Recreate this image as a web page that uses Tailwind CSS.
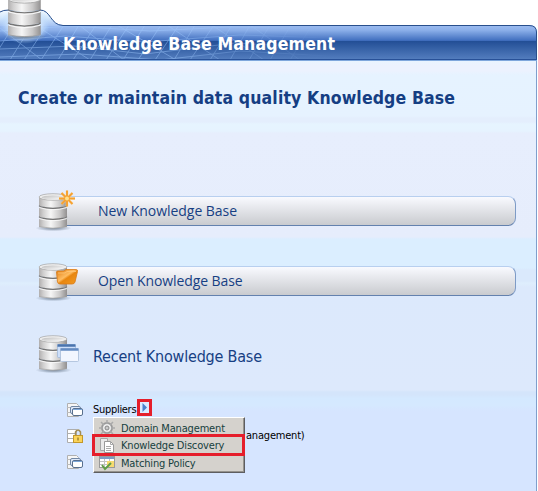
<!DOCTYPE html>
<html lang="en">
<head>
<meta charset="utf-8">
<title>Knowledge Base Management</title>
<script src="https://cdn.jsdelivr.net/npm/@tailwindcss/browser@4"></script>
</head>
<body class="w-[538px] h-[491px] overflow-hidden bg-white font-['DejaVu_Sans_Condensed','DejaVu_Sans',sans-serif]">
<svg width="0" height="0" class="absolute">
  <defs>
    <linearGradient id="metal"><stop offset="0" stop-color="#b0aeae"/><stop offset=".15" stop-color="#cfcece"/><stop offset=".42" stop-color="#f6f6f6"/><stop offset=".75" stop-color="#c9c8c8"/><stop offset="1" stop-color="#929090"/></linearGradient>
    <linearGradient id="top" x1="0" y1="0" x2="1" y2="1"><stop offset="0" stop-color="#bbb"/><stop offset="1" stop-color="#fff"/></linearGradient>
    <linearGradient id="gold" x1="0" y1="0" x2="1" y2="1"><stop offset="0" stop-color="#df790b"/><stop offset=".45" stop-color="#ffbd62"/><stop offset=".55" stop-color="#e8860f"/><stop offset="1" stop-color="#f29a22"/></linearGradient>
    <linearGradient id="bar" gradientUnits="userSpaceOnUse" x1="0" y1="25" x2="0" y2="60"><stop offset="0" stop-color="#9ebdf1"/><stop offset=".15" stop-color="#8bafe9"/><stop offset=".44" stop-color="#416fbf"/><stop offset=".47" stop-color="#234f96"/><stop offset="1" stop-color="#557fc0"/></linearGradient>
    <linearGradient id="tab" gradientUnits="userSpaceOnUse" x1="0" y1="10" x2="0" y2="27"><stop offset="0" stop-color="#f5fbff"/><stop offset=".45" stop-color="#d3e8fc"/><stop offset="1" stop-color="#9ebdf1"/></linearGradient>
    <linearGradient id="meshfade" gradientUnits="userSpaceOnUse" x1="0" y1="0" x2="330" y2="0"><stop offset="0" stop-color="#fff"/><stop offset=".5" stop-color="#fff"/><stop offset="1" stop-color="#000"/></linearGradient>
    <radialGradient id="shadow"><stop offset="0" stop-color="#536477" stop-opacity=".8"/><stop offset="1" stop-color="#536477" stop-opacity="0"/></radialGradient>
    <radialGradient id="glow"><stop offset="0" stop-color="#fff"/><stop offset=".6" stop-color="#dceeff" stop-opacity=".85"/><stop offset="1" stop-color="#b8daff" stop-opacity="0"/></radialGradient>
    <mask id="meshmask" maskUnits="userSpaceOnUse" x="0" y="25" width="330" height="36"><rect y="25" width="330" height="36" fill="url(#meshfade)"/></mask>
    <symbol id="db" viewBox="0 0 36 40">
      <ellipse cx="18" cy="35.500" rx="18" ry="3" fill="url(#shadow)"/>
      <path d="M3.500 4v9q14 4 28 0V4zM3.500 15v9q14 4 28 0v-9zM3.500 26v8q14 3 28 0v-8z" fill="url(#metal)"/>
      <path d="M3.500 13q1 1 2 1.200 12 3 24 0 1-.2 2-1.200M3.500 24q1 1 2 1.200 12 3 24 0 1-.2 2-1.200" fill="none" stroke="#757575" stroke-width="1.100"/>
      <path d="M3.500 34q14 3 28 0" fill="none" stroke="#a0a0a0" stroke-width=".7"/>
      <path d="M4 15q13.500 4 27 0M4 26q13.500 4 27 0" fill="none" stroke="#f8f8f8" stroke-width=".9"/>
      <ellipse cx="17.500" cy="4.300" rx="14" ry="3.300" fill="#eee" stroke="#a3a3a3" stroke-width=".7"/>
      <ellipse cx="17.500" cy="4.800" rx="11.500" ry="2.100" fill="url(#top)"/>
    </symbol>
    <symbol id="recent" viewBox="0 0 18 16">
      <path d="M1.500 1.500h9l2 2v11h-11z" fill="#f6f6f6" stroke="#b0b0b0"/>
      <path d="M1 5.500h8M1 10.500h5" stroke="#bbb"/>
      <rect x="4.500" y="4.500" width="10" height="7" rx="1.500" fill="#dfeafb" stroke="#7187a4"/>
      <rect x="6.500" y="6.500" width="10" height="7" rx="1.500" fill="#fff" stroke="#59708e"/>
      <path d="M7 7.500h9" stroke="#7da7d9"/>
    </symbol>
  </defs>
</svg>
<div class="flex flex-col w-[538px] h-[491px]">
  <header class="relative h-[61px] shrink-0">
    <svg class="absolute inset-0" width="538" height="61">
      <path d="M0 12Q3 10 9 10H40C51 10 50 25 63 25H530Q536.500 25 536.500 31V61H0z" fill="url(#bar)"/>
      <path d="M0 12Q3 10 9 10H40C49 10 51 22 60 26H0z" fill="url(#tab)"/>
      <g mask="url(#meshmask)" fill="none" stroke="#a1cbff" stroke-width=".9" opacity=".5">
        <path d="M0 31L70 26L150 31L230 27L330 29M0 41L65 36L145 42L240 35L330 38M0 49L74 46L145 54L235 43L330 48M0 57L80 54L160 60L240 51L330 56"/>
        <path d="M-8 60L14 25M10 60L32 25M24 60L47 25M41 60L64 25M58 60L79 25M73 60L96 25M90 60L112 25M106 60L129 25M123 60L145 25M138 60L161 25M155 60L179 25M174 60L195 25M190 60L214 25M210 60L232 25M230 60L250 25M249 60L270 25M270 60L291 25M290 60L312 25"/>
        <path d="M0 28L42 60M35 25L90 60M79 25L124 60M117 25L176 60M167 25L220 60M212 25L264 60M250 25L300 60"/>
      </g>
      <path d="M0 12Q3 10 9 10H40C51 10 50 25 63 25.500H529Q536.500 25.500 536.500 32V60" fill="none" stroke="#294f8c"/>
      <path d="M0 59.500H537" stroke="#285198"/><path d="M0 60.500H537" stroke="#7fa7dc"/>
      <ellipse cx="25" cy="25" rx="25" ry="19" fill="url(#glow)"/>
      <svg x="4" y="-6" width="42" height="48" viewBox="0 0 36 40" preserveAspectRatio="none"><use href="#db" width="36" height="40"/></svg>
    </svg>
    <h1 class="absolute left-[63px] top-[33px] text-[17.5px] leading-[22px] font-bold text-white whitespace-nowrap tracking-[0.18px]">Knowledge Base Management</h1>
  </header>
  <main class="relative w-[537px] h-[430px] border-r border-[#7f9fcd] bg-[linear-gradient(180deg,#e9f4ff_0px,#ecf2fe_4px,#ecf2fe_10px,#e6f3ff_14px,#e6f2ff_55px,#e4eefd_57px,#e4eefd_61px,#e6f4ff_63px,#e6f3ff_70px,#e7eefd_72px,#e6edfc_176px,#dbeeff_178px,#dbeeff_207px,#dae9fc_209px,#dae9fc_220px,#deeefd_222px,#dce9fc_226px,#dde9fc_329px,#d4e5fb_331px,#d4e5fb_334px,#d4e9ff_337px,#d5e9ff_344px,#d6e5ff_350px,#d6e5ff_430px)]">
    <h2 class="pt-[25px] pl-[18px] h-[133px] text-[17.5px] leading-[24px] font-bold text-[#153e83] whitespace-nowrap tracking-[0.13px]">Create or maintain data quality Knowledge Base</h2>
    <div class="flex h-[70px] pl-[34px]">
      <svg class="relative z-10 -top-[2px] w-[46px] h-[42px] shrink-0 overflow-visible" viewBox="0 0 46 42"><use href="#db" x="1.500" y=".7" width="36" height="40"/>
        <path d="M33-1.500V14.500M25 6.500H41M27.500 1L38.500 12M38.500 1L27.500 12" stroke="#ffd796" stroke-width="3" opacity=".5"/><path d="M33-1.500V14.500M25 6.500H41M27.500 1L38.500 12M38.500 1L27.500 12" stroke="#f5a233" stroke-width="2"/><circle cx="33" cy="6.500" r="2" fill="#ffe08c"/></svg>
      <div class="mt-[2px] -ml-[30px] w-[466px] h-[30px] rounded-r-[8px] border border-l-0 border-t-[#b8cfef] border-r-[#7e9bc6] border-b-[#6381ae] bg-linear-to-b from-[#f9faff] to-[#c9cbcf] pl-[48px] text-[14px] leading-[28px] text-[#173f83] tracking-[-0.04px] font-['Open_Sans','Noto_Sans',sans-serif]">New Knowledge Base</div>
    </div>
    <div class="flex h-[70px] pl-[34px]">
      <svg class="relative z-10 -top-[2px] w-[46px] h-[42px] shrink-0 overflow-visible" viewBox="0 0 46 42"><use href="#db" x="1.500" y=".7" width="36" height="40"/>
        <path d="M22.500 10Q22.500 9 24 9H30L32 7.500H42Q44 7.500 43.500 9.500L41 20Q40.500 22 38 22H26Q24 22 23.500 20Z" fill="url(#gold)" stroke="#d97a14" stroke-width=".8"/><path d="M24 11H31L33 9.500H42" fill="none" stroke="#ffc777" stroke-width=".8"/></svg>
      <div class="mt-[2px] -ml-[30px] w-[466px] h-[30px] rounded-r-[8px] border border-l-0 border-t-[#b8cfef] border-r-[#7e9bc6] border-b-[#6381ae] bg-linear-to-b from-[#f9faff] to-[#c9cbcf] pl-[48px] text-[14px] leading-[28px] text-[#173f83] tracking-[-0.1px] font-['Open_Sans','Noto_Sans',sans-serif]">Open Knowledge Base</div>
    </div>
    <div class="flex h-[66px] pl-[34px]">
      <svg class="w-[46px] h-[42px] shrink-0" viewBox="0 0 46 42"><use href="#db" x="1.500" y=".7" width="36" height="40"/><rect x="23.500" y="10.500" width="18" height="13" rx="1" fill="#cddffa" stroke="#9bb6db" stroke-width=".7"/><path d="M23.500 11.500H41.500" stroke="#4a74ae" stroke-width="2.500"/><rect x="26.500" y="14.500" width="18" height="13" rx="1" fill="#f2f6ff" stroke="#a8bcd8" stroke-width=".8"/><path d="M26.500 15.500H44.500" stroke="#638bc3" stroke-width="2.500"/></svg>
      <h3 class="pl-[13px] pt-[12px] text-[16px] leading-[22px] tracking-[-0.2px] text-[#173f83]">Recent Knowledge Base</h3>
    </div>
    <div class="flex flex-col gap-[10px] pl-[66px] pt-[2px] text-[11px] leading-[16px] text-black">
      <div class="flex gap-[9px]"><svg class="w-[18px] h-[16px]"><use href="#recent"/></svg><span class="tracking-[-0.3px]">Suppliers</span></div>
      <div class="flex gap-[9px]"><svg class="w-[18px] h-[16px]" viewBox="0 0 18 16"><path d="M1.500 1.500h9v13h-9zM1.500 5.500h9M1.500 10.500h9" fill="#fff" stroke="#adadad"/><path d="M9.500 8V4q2.500-4 5 0V8" fill="none" stroke="#a28d55" stroke-width="1.500"/><rect x="7.500" y="7.500" width="9" height="7" fill="#fbd45a" stroke="#c3982b"/><path d="M12 9.500v3" stroke="#785e13"/></svg><span class="pl-[153px] tracking-[-0.2px]">anagement)</span></div>
      <div class="flex"><svg class="w-[18px] h-[16px]"><use href="#recent"/></svg></div>
    </div>
    <div class="absolute left-[137px] top-[338px] w-[15px] h-[17px] border-[3px] border-[#e51e2b] bg-[#dceaff]"><svg width="9" height="11"><path d="M2.500 1L7 5.500L2.500 10z" fill="#4b80cd"/></svg></div>
    <div class="absolute left-[93px] top-[356px] w-[152px] h-[56px] border border-t-white border-l-white border-r-[#5d5d60] border-b-[#5d5d60] shadow-[inset_-1px_-1px_#96938d] bg-[#d5d2cd] flex flex-col pt-[2px] text-[11px] leading-[18px] tracking-[-0.17px] text-[#173f3e]">
      <div class="flex h-[17px] gap-[6px] pl-[5px]"><svg class="w-4 h-4" viewBox="0 0 16 16"><circle cx="8" cy="8" r="5" fill="#eee" stroke="#9b9b9b" stroke-width="2"/><path d="M8 0V4M8 12V16M0 8H4M12 8H16M2 2L5 5M11 11L14 14M14 2L11 5M5 11L2 14" stroke="#aaa" stroke-width="1.500"/><circle cx="8" cy="8" r="2" fill="#ccc" stroke="#888"/></svg><span>Domain Management</span></div>
      <div class="flex h-[18px] gap-[6px] pl-[5px]"><svg class="mt-px w-4 h-4" viewBox="0 0 16 16"><path d="M1.500.500h7v12h-7z" fill="#e9e9e9" stroke="#a6a6a6"/><path d="M5.500 3.500h6l3 3v8h-9z" fill="#fff" stroke="#999"/><path d="M11.500 3.500v3h3M7 8.500h5M7 10.500h5M7 12.500h5" fill="none" stroke="#aaa"/></svg><span>Knowledge Discovery</span></div>
      <div class="flex h-[18px] gap-[6px] pl-[5px]"><svg class="w-4 h-4" viewBox="0 0 16 16"><rect x=".500" y="1.500" width="15" height="11" fill="#fff" stroke="#999"/><path d="M1 3H15" stroke="#7e9cc4" stroke-width="2"/><path d="M1 6.500H15M1 9.500H15M5.500 4V12M10.500 4V12" stroke="#c3c3c3"/><path d="M8 6h7v6H8z" fill="#f6db70"/><path d="M3 10L6 14L12 8" fill="none" stroke="#5e9d47" stroke-width="2"/></svg><span>Matching Policy</span></div>
      <div class="absolute -left-[2px] top-[16px] w-[153px] h-[22px] border-[3px] border-[#e51e2b]"></div>
    </div>
  </main>
</div>
</body>
</html>
